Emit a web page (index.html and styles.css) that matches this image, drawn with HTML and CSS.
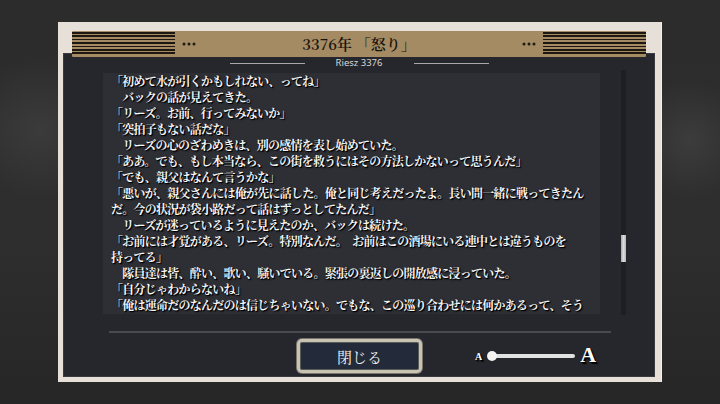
FILE: index.html
```html
<!DOCTYPE html>
<html lang="ja">
<head>
<meta charset="utf-8">
<title>Log</title>
<link rel="stylesheet" href="styles.css">
</head>
<body>
<div class="frame">
  <div class="header">
    <div class="stripes"></div>
    <svg class="dots" width="14" height="4" viewBox="0 0 14 4"><circle cx="2" cy="2" r="1.5"/><circle cx="7" cy="2" r="1.5"/><circle cx="12" cy="2" r="1.5"/></svg>
    <div class="title">3376年 「怒り」</div>
    <svg class="dots" width="14" height="4" viewBox="0 0 14 4"><circle cx="2" cy="2" r="1.5"/><circle cx="7" cy="2" r="1.5"/><circle cx="12" cy="2" r="1.5"/></svg>
    <div class="stripes"></div>
  </div>
  <div class="panel">
    <div class="speaker">
      <span class="rule"></span>
      <span class="name">Riesz 3376</span>
      <span class="rule"></span>
    </div>
    <div class="content">
      <div class="log">
        <p>「初めて水が引くかもしれない、ってね」</p>
        <p>　バックの話が見えてきた。</p>
        <p>「リーズ。お前、行ってみないか」</p>
        <p>「突拍子もない話だな」</p>
        <p>　リーズの心のざわめきは、別の感情を表し始めていた。</p>
        <p>「ああ。でも、もし本当なら、この街を救うにはその方法しかないって思うんだ」</p>
        <p>「でも、親父はなんて言うかな」</p>
        <p>「悪いが、親父さんには俺が先に話した。俺と同じ考えだったよ。長い間一緒に戦ってきたん</p>
        <p>だ。今の状況が袋小路だって話はずっとしてたんだ」</p>
        <p>　リーズが迷っているように見えたのか、バックは続けた。</p>
        <p>「お前には才覚がある、リーズ。特別なんだ。　お前はこの酒場にいる連中とは違うものを</p>
        <p>持ってる」</p>
        <p>　隊員達は皆、酔い、歌い、騒いでいる。緊張の裏返しの開放感に浸っていた。</p>
        <p>「自分じゃわからないね」</p>
        <p>「俺は運命だのなんだのは信じちゃいない。でもな、この巡り合わせには何かあるって、そう</p>
      </div>
      <div class="scroll"><div class="thumb"></div></div>
    </div>
    <div class="divider"></div>
    <div class="controls">
      <button class="close">閉じる</button>
      <div class="slider">
        <span class="a-small">A</span>
        <div class="track"><span class="knob"></span></div>
        <span class="a-big">A</span>
      </div>
    </div>
  </div>
</div>
</body>
</html>
```
FILE: styles.css
```css
* { box-sizing: border-box; }
html, body { margin: 0; padding: 0; }
body {
  width: 720px;
  height: 404px;
  overflow: hidden;
  background:
    radial-gradient(ellipse 80px 70px at 40px 130px, #3b3b3b 0, rgba(59,59,59,0) 100%),
    radial-gradient(ellipse 60px 60px at 690px 140px, #3c3c3c 0, rgba(60,60,60,0) 100%),
    linear-gradient(180deg, #2c2c2c 0, #2e2e2e 60%, #262626 100%);
  padding-top: 22px;
  padding-left: 58px;
}
.frame {
  width: 604px;
  height: 360px;
  background: #e6e0d8;
  padding-top: 9px;
  border-right: 1px solid #f4f1ec;
}
.header {
  position: relative;
  z-index: 1;
  margin: 0 15px 0 14px;
  height: 26px;
  background: #a48b63;
  display: flex;
  align-items: center;
  border-radius: 1px;
}
.stripes {
  width: 103px;
  height: 24px;
  background: repeating-linear-gradient(180deg, #1c1710 0, #1c1710 1.6px, #a48b63 1.6px, #a48b63 3.4px);
}
.dots { fill: #1e1a14; margin: 0 7px; }
.title {
  flex: 1;
  text-align: center;
  font-family: "Noto Serif CJK JP", "Liberation Serif", "Noto Sans CJK JP", serif;
  font-size: 15px;
  font-weight: 600;
  color: #17120b;
  line-height: 26px;
}
.panel {
  margin: -4px 6px 0 5px;
  height: 324px;
  background: #26272c;
  padding-top: 4px;
  box-shadow: inset 0 0 0 1px #3a3b40;
}
.speaker {
  height: 12px;
  display: flex;
  align-items: center;
  justify-content: center;
}
.rule {
  width: 75px;
  height: 1px;
  background: #a8a8a8;
}
.name {
  width: 109px;
  text-align: center;
  font-family: "Noto Sans", sans-serif;
  font-size: 9.5px;
  color: #d6d6d6;
  line-height: 12px;
}
.content {
  display: flex;
  margin: 4px 0 0 40px;
  gap: 21px;
}
.log {
  width: 497px;
  height: 241px;
  background: #2e2f35;
  padding: 0 0 0 8px;
  overflow: hidden;
}
.log p {
  margin: 0;
  white-space: nowrap;
  font-family: "Noto Serif CJK JP", "Noto Sans CJK JP", sans-serif;
  font-weight: 700;
  font-size: 12px;
  letter-spacing: -0.75px;
  line-height: 16px;
  color: #f6f6f6;
  text-shadow: 1px 1px 0 #000, 1px 1px 2px #000;
}
.scroll {
  width: 5px;
  height: 245px;
  margin-top: -3px;
  background: #1e1f23;
}
.thumb {
  margin-top: 165px;
  height: 27px;
  background: linear-gradient(90deg, #a9a9a9, #dcdcdc 50%, #b5b5b5);
}
.divider {
  margin: 16px 0 0 46px;
  width: 502px;
  height: 2px;
  background: #474b51;
}
.controls {
  display: flex;
  align-items: center;
  margin-top: 6px;
  padding-left: 234px;
  height: 34px;
}
.close {
  width: 125px;
  height: 34px;
  border: 3px solid #c9c3b5;
  border-radius: 5px;
  background: #232b3a;
  box-shadow: inset 0 0 0 1px #5a5a55, 0 0 0 1px #7b776c;
  color: #f2f2f2;
  font-family: "Noto Serif CJK JP", "Noto Sans CJK JP", sans-serif;
  font-size: 15px;
  padding: 0;
}
.slider {
  display: flex;
  align-items: center;
  margin-left: 53px;
}
.a-small, .a-big {
  font-family: "Liberation Serif", serif;
  font-weight: 700;
  color: #fff;
  text-shadow: 1px 1px 0 #000, 2px 2px 1px #000;
}
.a-small { font-size: 10px; margin-right: 3px; }
.a-big { font-size: 22px; margin-left: 5px; margin-top: -2px; }
.track {
  position: relative;
  width: 88px;
  height: 4px;
  margin-left: 2px;
  background: linear-gradient(90deg, transparent 5px, #e2e2e2 5px);
  border-radius: 2px;
}
.knob {
  position: absolute;
  left: 0;
  top: -3px;
  width: 10px;
  height: 10px;
  border-radius: 50%;
  background: #f4f4f4;
}
```
